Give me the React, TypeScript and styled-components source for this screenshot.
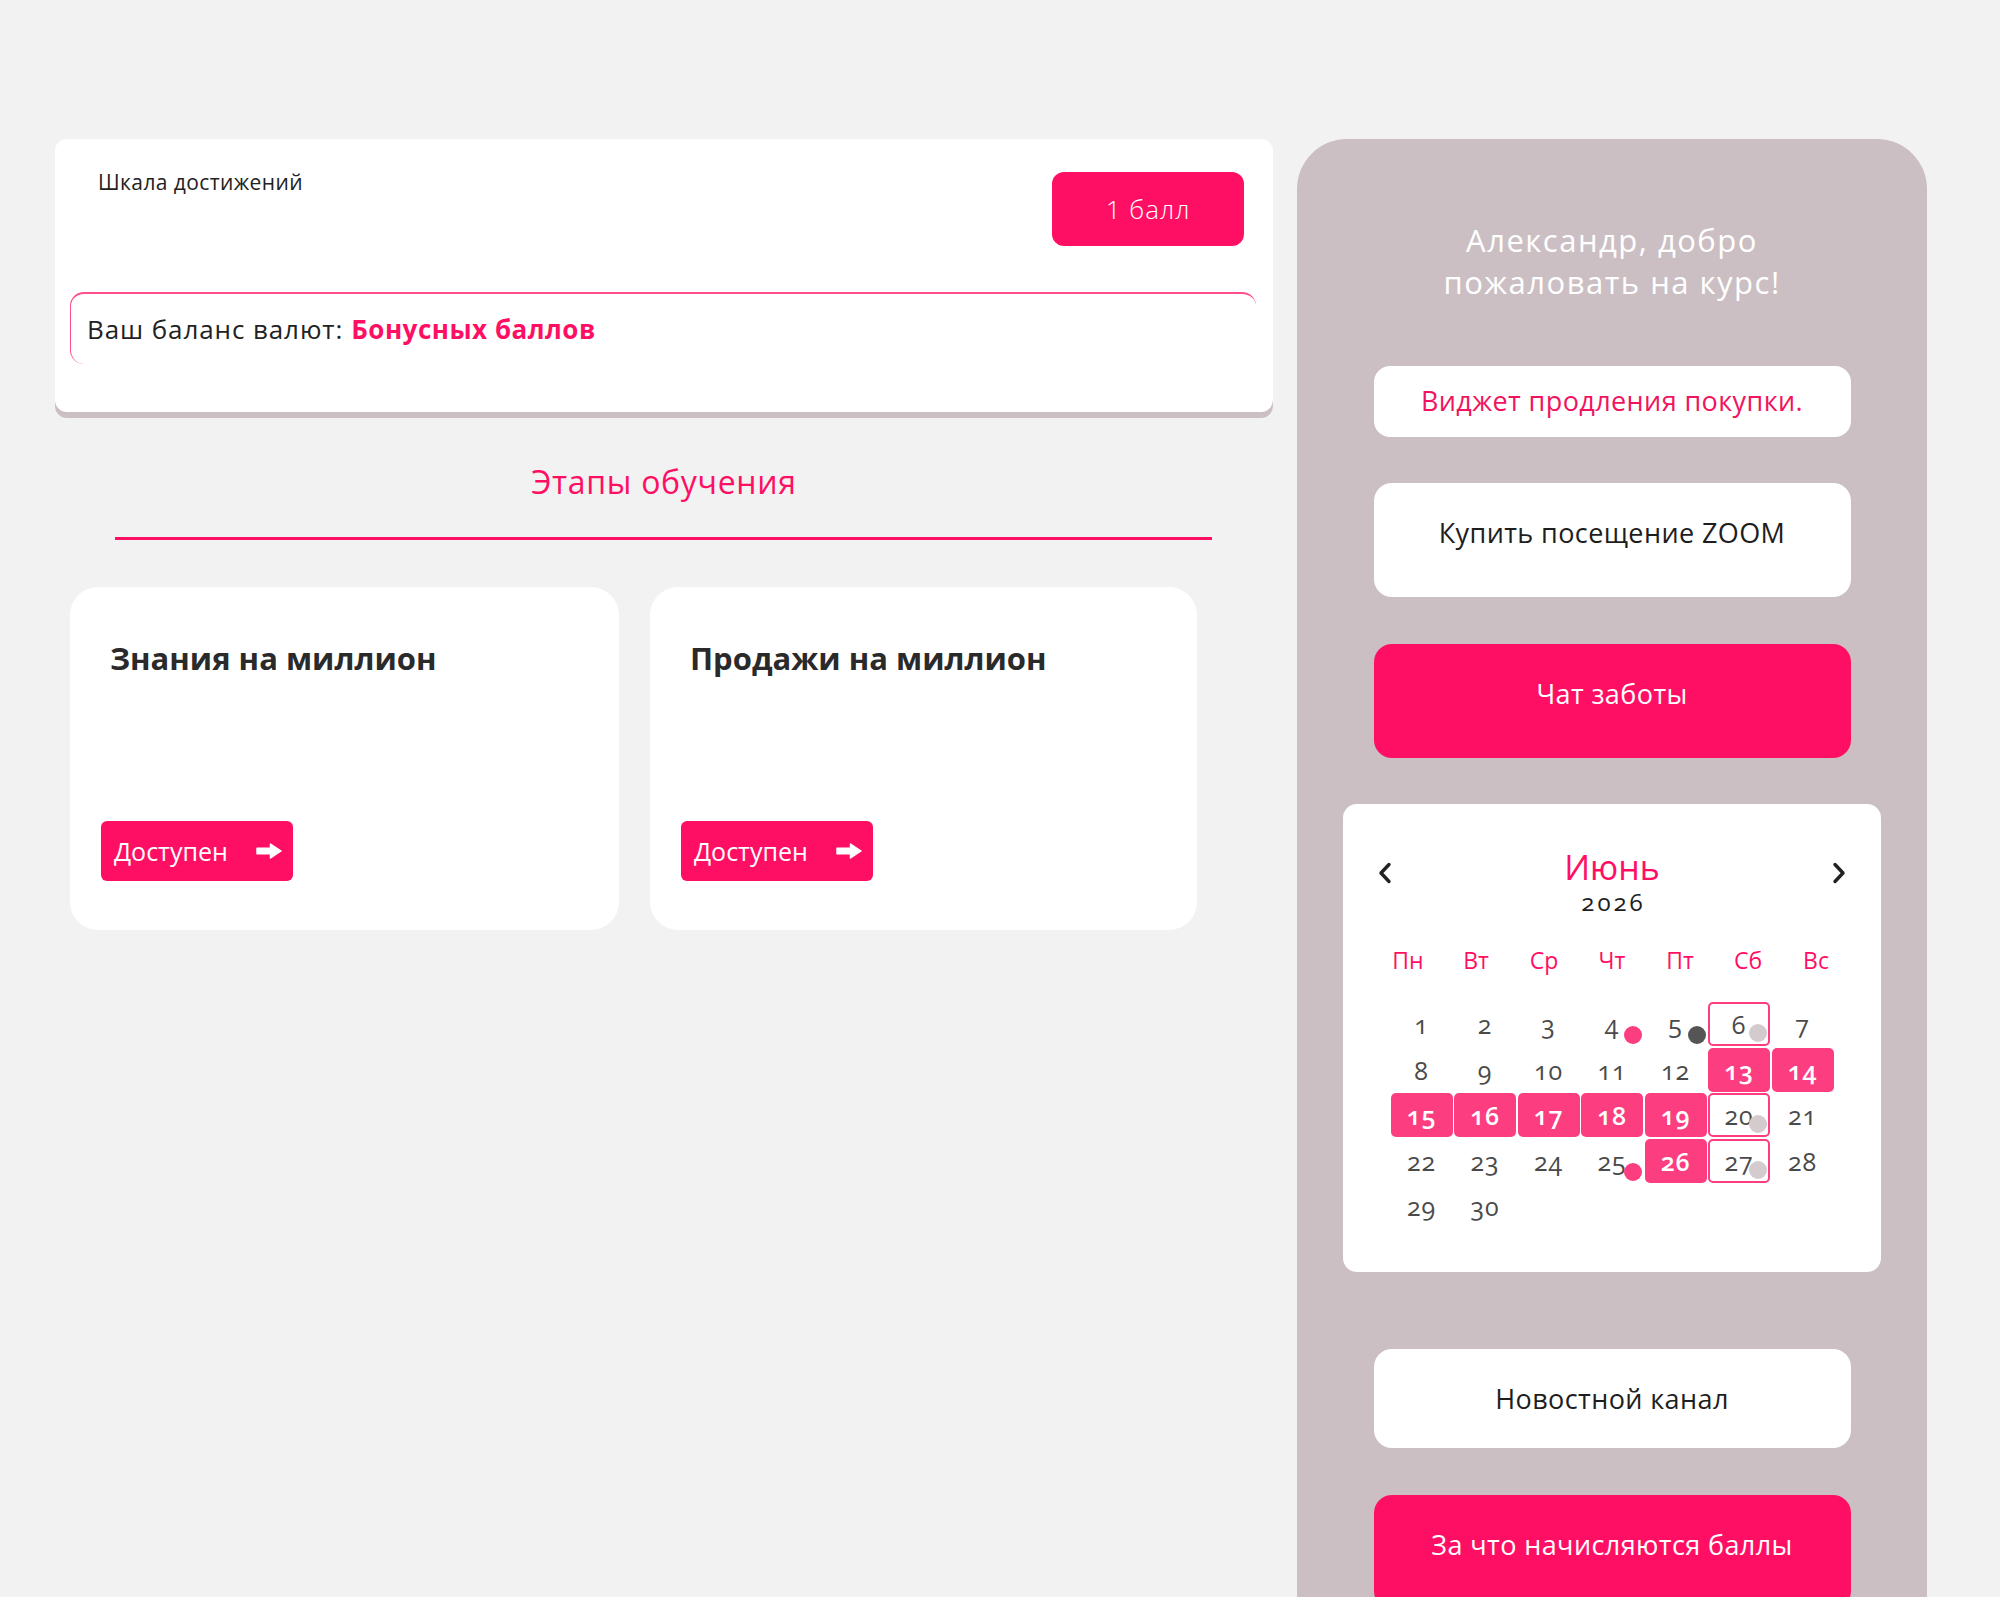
import React from "react";
import styled, { createGlobalStyle, css } from "styled-components";

const PINK = "#ff0f64";
const CAL_PINK = "#fc3d7f";
const LILAC = "#cbbfc3";
const FONT = `"Open Sans", "Noto Sans", sans-serif`;

const GlobalStyle = createGlobalStyle`
  html, body { margin: 0; padding: 0; }
  body {
    background: #f2f2f2;
    font-family: ${FONT};
    color: #262626;
  }
  * { box-sizing: border-box; }
`;

const Page = styled.div`
  display: flex;
  align-items: flex-start;
  gap: 24px;
  padding: 139px 0 0 55px;
`;

const Main = styled.main`
  width: 1218px;
  display: flex;
  flex-direction: column;
`;

const TopCard = styled.section`
  background: #fff;
  border-radius: 12px;
  box-shadow: 0 6px 0 ${LILAC};
  padding: 31px 0 48px 0;
  display: flex;
  flex-direction: column;
`;

const TopRow = styled.div`
  display: flex;
  justify-content: space-between;
  align-items: flex-start;
  padding: 0 29px 0 43px;
`;

const ScaleTitle = styled.div`
  font-size: 21px;
  line-height: 24px;
  letter-spacing: 0.4px;
  color: #222;
`;

const PointsBadge = styled.button`
  margin-top: 2px;
  width: 192px;
  height: 74px;
  border: none;
  border-radius: 12px;
  background: ${PINK};
  color: #fff;
  font-family: ${FONT};
  font-weight: 300;
  font-size: 26px;
  letter-spacing: 1px;
`;

const BalanceBox = styled.div`
  margin: 46px 17px 0 15px;
  height: 72px;
  border-top: 2px solid #ff4f88;
  border-left: 1px solid #ff4f88;
  border-radius: 14px;
  display: flex;
  align-items: center;
  padding-left: 16px;
  font-size: 26px;
  letter-spacing: 0.9px;
  color: #222;
`;

const Accent = styled.span`
  color: ${PINK};
  font-weight: 700;
  font-size: 26px;
  letter-spacing: 0.5px;
  margin-left: 8px;
`;

const StagesTitle = styled.h2`
  margin: 50px 0 0;
  text-align: center;
  font-size: 32px;
  line-height: 40px;
  letter-spacing: 0.7px;
  font-weight: 400;
  color: ${PINK};
`;

const Divider = styled.hr`
  margin: 35px 61px 0 60px;
  height: 3px;
  border: none;
  background: ${PINK};
`;

const CourseGrid = styled.div`
  display: grid;
  grid-template-columns: 549px 547px;
  column-gap: 31px;
  margin: 47px 0 0 15px;
`;

const CourseCard = styled.article`
  height: 343px;
  background: #fff;
  border-radius: 28px;
  padding: 51px 0 0 31px;
  display: flex;
  flex-direction: column;
  align-items: flex-start;
`;

const CourseTitle = styled.h3`
  margin: 0;
  padding-left: 9px;
  font-size: 31px;
  line-height: 40px;
  font-weight: 700;
  color: #2a2a2a;
`;

const AvailableButton = styled.button`
  margin-top: 143px;
  width: 192px;
  height: 60px;
  border: none;
  border-radius: 6px;
  background: ${PINK};
  color: #fff;
  font-family: ${FONT};
  font-size: 25px;
  display: flex;
  align-items: center;
  justify-content: space-between;
  padding: 0 11px 0 13px;
`;

const Sidebar = styled.aside`
  width: 630px;
  min-height: 1520px;
  background: ${LILAC};
  border-radius: 50px 50px 0 0;
  padding: 80px 0 40px;
  display: flex;
  flex-direction: column;
  align-items: center;
`;

const Welcome = styled.h1`
  margin: 0;
  text-align: center;
  font-size: 31px;
  line-height: 42px;
  letter-spacing: 1.5px;
  font-weight: 400;
  color: #fff;
`;

type Variant = "widget" | "white" | "pink";

const SideButton = styled.button<{ $variant: Variant; $height: number; $gap: number }>`
  margin-top: ${(p) => p.$gap}px;
  width: 477px;
  height: ${(p) => p.$height}px;
  border: none;
  border-radius: 18px;
  font-family: ${FONT};
  font-size: 27px;
  line-height: 34px;
  letter-spacing: 0.4px;
  display: flex;
  justify-content: center;
  align-items: ${(p) => (p.$variant === "widget" ? "center" : "flex-start")};
  padding-top: ${(p) => (p.$variant === "widget" ? 0 : 33)}px;
  ${(p) =>
    p.$variant === "widget"
      ? css`
          background: #fff;
          color: #f0145e;
          border-radius: 16px;
        `
      : p.$variant === "white"
      ? css`
          background: #fff;
          color: #1e1e1e;
        `
      : css`
          background: ${PINK};
          color: #fff;
        `}
`;

const CalendarCard = styled.section`
  margin-top: 46px;
  width: 538px;
  height: 468px;
  background: #fff;
  border-radius: 14px;
  padding-top: 45px;
`;

const CalHeader = styled.div`
  display: grid;
  grid-template-columns: 14px 1fr 14px;
  padding: 0 35px;
  align-items: start;
`;

const ArrowBtn = styled.span`
  margin-top: 13px;
  display: block;
  height: 22px;
`;

const MonthBlock = styled.div`
  text-align: center;
`;

const MonthName = styled.div`
  font-size: 34px;
  line-height: 36px;
  color: ${PINK};
`;

const YearName = styled.div`
  margin-top: 3px;
  font-size: 24px;
  line-height: 28px;
  letter-spacing: 3px;
  padding-left: 3px;
  color: #1e1e1e;
  font-variant-numeric: oldstyle-nums;
`;

const WeekRow = styled.div`
  margin: 29px auto 0;
  width: 476px;
  display: grid;
  grid-template-columns: repeat(7, 68px);
`;

const WeekDay = styled.div`
  text-align: center;
  font-size: 23px;
  line-height: 30px;
  color: ${PINK};
`;

const DaysGrid = styled.div`
  margin: 27px auto 0;
  width: 443px;
  display: grid;
  grid-template-columns: repeat(7, 62px);
  grid-auto-rows: 44px;
  gap: 1.5px;
`;

type CellKind = "plain" | "filled" | "outlined";

const DayCell = styled.div<{ $kind: CellKind }>`
  position: relative;
  display: flex;
  align-items: center;
  justify-content: center;
  font-size: 25px;
  letter-spacing: 0.8px;
  font-variant-numeric: oldstyle-nums;
  color: #4a4a4a;
  border-radius: 5px;
  ${(p) =>
    p.$kind === "filled" &&
    css`
      background: ${CAL_PINK};
      color: #fff;
      font-weight: 600;
    `}
  ${(p) =>
    p.$kind === "outlined" &&
    css`
      border: 2px solid ${CAL_PINK};
    `}
`;

const Dot = styled.span<{ $color: string }>`
  position: absolute;
  right: 1px;
  bottom: 2px;
  width: 18px;
  height: 18px;
  border-radius: 50%;
  background: ${(p) => p.$color};
`;

const Chevron = ({ dir }: { dir: "left" | "right" }) => (
  <svg width="14" height="22" viewBox="0 0 14 22">
    <polyline
      points={dir === "left" ? "11,2.5 3,11 11,19.5" : "3,2.5 11,11 3,19.5"}
      fill="none"
      stroke="#222"
      strokeWidth="3.4"
      strokeLinecap="round"
      strokeLinejoin="round"
    />
  </svg>
);

const ArrowRight = () => (
  <svg width="26" height="16" viewBox="0 0 26 16">
    <path
      d="M1 5.2 H14.5 V1 L25 8 L14.5 15 V10.8 H1 Z"
      fill="#fff"
      stroke="#fff"
      strokeWidth="1.5"
      strokeLinejoin="round"
    />
  </svg>
);

const filled = new Set([13, 14, 15, 16, 17, 18, 19, 26]);
const outlined = new Set([6, 20, 27]);
const dots: Record<number, string> = {
  4: "#fc3d7f",
  5: "#555555",
  6: "#d3cbce",
  20: "#d3cbce",
  25: "#fc3d7f",
  27: "#d3cbce",
};

const weekdays = ["Пн", "Вт", "Ср", "Чт", "Пт", "Сб", "Вс"];

const courses = ["Знания на миллион", "Продажи на миллион"];

export default function App() {
  const days = Array.from({ length: 30 }, (_, i) => i + 1);
  return (
    <>
      <GlobalStyle />
      <Page>
        <Main>
          <TopCard>
            <TopRow>
              <ScaleTitle>Шкала достижений</ScaleTitle>
              <PointsBadge>1 балл</PointsBadge>
            </TopRow>
            <BalanceBox>
              Ваш баланс валют:<Accent>Бонусных баллов</Accent>
            </BalanceBox>
          </TopCard>
          <StagesTitle>Этапы обучения</StagesTitle>
          <Divider />
          <CourseGrid>
            {courses.map((c) => (
              <CourseCard key={c}>
                <CourseTitle>{c}</CourseTitle>
                <AvailableButton>
                  Доступен
                  <ArrowRight />
                </AvailableButton>
              </CourseCard>
            ))}
          </CourseGrid>
        </Main>
        <Sidebar>
          <Welcome>
            Александр, добро
            <br />
            пожаловать на курс!
          </Welcome>
          <SideButton $variant="widget" $height={71} $gap={63}>
            Виджет продления покупки.
          </SideButton>
          <SideButton $variant="white" $height={114} $gap={46}>
            Купить посещение ZOOM
          </SideButton>
          <SideButton $variant="pink" $height={114} $gap={47}>
            Чат заботы
          </SideButton>
          <CalendarCard>
            <CalHeader>
              <ArrowBtn>
                <Chevron dir="left" />
              </ArrowBtn>
              <MonthBlock>
                <MonthName>Июнь</MonthName>
                <YearName>2026</YearName>
              </MonthBlock>
              <ArrowBtn>
                <Chevron dir="right" />
              </ArrowBtn>
            </CalHeader>
            <WeekRow>
              {weekdays.map((d) => (
                <WeekDay key={d}>{d}</WeekDay>
              ))}
            </WeekRow>
            <DaysGrid>
              {days.map((d) => (
                <DayCell
                  key={d}
                  $kind={filled.has(d) ? "filled" : outlined.has(d) ? "outlined" : "plain"}
                >
                  {d}
                  {dots[d] && <Dot $color={dots[d]} />}
                </DayCell>
              ))}
            </DaysGrid>
          </CalendarCard>
          <SideButton $variant="white" $height={99} $gap={77}>
            Новостной канал
          </SideButton>
          <SideButton $variant="pink" $height={114} $gap={47}>
            За что начисляются баллы
          </SideButton>
        </Sidebar>
      </Page>
    </>
  );
}
